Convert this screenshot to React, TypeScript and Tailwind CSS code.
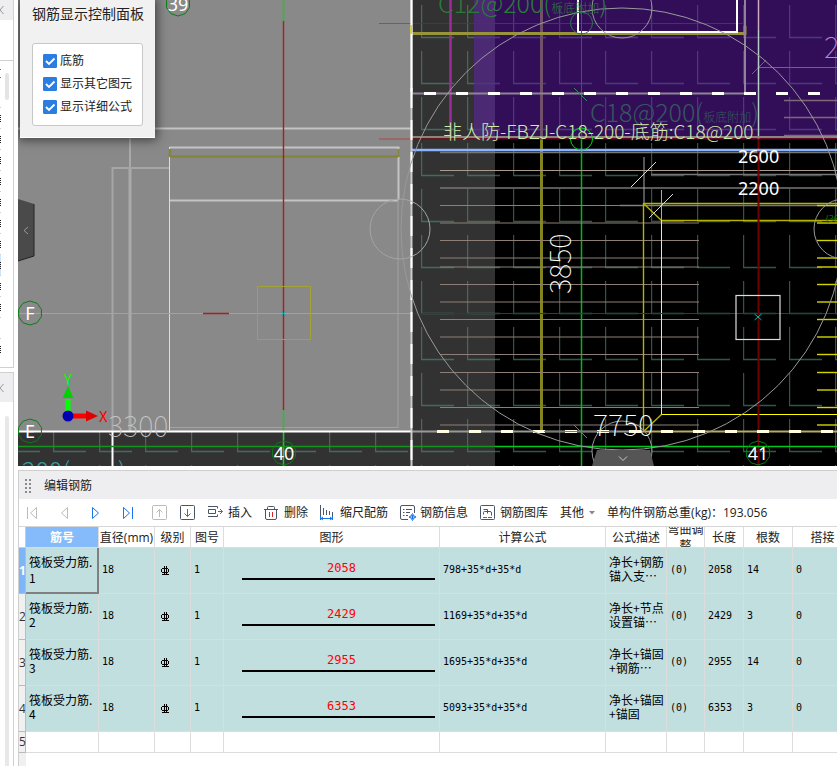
import { ReactNode, useState } from 'react';
import clsx from 'clsx';

const uiFont = "font-['Open_Sans','Noto_Sans_CJK_SC',sans-serif]";
const monoFont = "font-['DejaVu_Sans_Mono','Noto_Sans_CJK_SC',monospace]";
const cadFont = "font-['Noto_Sans_CJK_SC',sans-serif]";

interface BarRow {
    name: string;
    diameter: string;
    shapeNo: string;
    shape: string;
    formula: string;
    description: string[];
    bend: string;
    length: string;
    count: string;
    lap: string;
}

const rows: BarRow[] = [
    { name: '筏板受力筋.1', diameter: '18', shapeNo: '1', shape: '2058', formula: '798+35*d+35*d', description: ['净长+钢筋', '锚入支⋯'], bend: '(0)', length: '2058', count: '14', lap: '0' },
    { name: '筏板受力筋.2', diameter: '18', shapeNo: '1', shape: '2429', formula: '1169+35*d+35*d', description: ['净长+节点', '设置锚⋯'], bend: '(0)', length: '2429', count: '3', lap: '0' },
    { name: '筏板受力筋.3', diameter: '18', shapeNo: '1', shape: '2955', formula: '1695+35*d+35*d', description: ['净长+锚固', '+钢筋⋯'], bend: '(0)', length: '2955', count: '14', lap: '0' },
    { name: '筏板受力筋.4', diameter: '18', shapeNo: '1', shape: '6353', formula: '5093+35*d+35*d', description: ['净长+锚固', '+锚固'], bend: '(0)', length: '6353', count: '3', lap: '0' },
];

const columns = [
    { title: '筋号', width: 'w-[73px]' },
    { title: '直径(mm)', width: 'w-[56px]' },
    { title: '级别', width: 'w-[36px]' },
    { title: '图号', width: 'w-[33px]' },
    { title: '图形', width: 'w-[216px]' },
    { title: '计算公式', width: 'w-[166px]' },
    { title: '公式描述', width: 'w-[61px]' },
    { title: '弯曲调整', width: 'w-[38px]' },
    { title: '长度', width: 'w-[39px]' },
    { title: '根数', width: 'w-[49px]' },
    { title: '搭接', width: 'w-[60px]' },
];

const barLines = [205.5, 223, 240.5, 258, 267, 284.5, 302, 319.5, 337, 354.5, 372.5, 390, 407.5, 425];

const axes = [
    { label: '39', x: 178, y: 4 },
    { label: 'F', x: 30, y: 313 },
    { label: 'E', x: 30, y: 431 },
    { label: '40', x: 284, y: 453 },
    { label: '41', x: 758, y: 453 },
];

const octagon = (x: number, y: number, r: number) =>
    Array.from({ length: 10 }, (_, i) => {
        const a = (i * Math.PI) / 5 + Math.PI / 2;
        return `${x + r * Math.cos(a)},${y + r * Math.sin(a)}`;
    }).join(' ');

function Drawing() {
    return (
        <svg className="block h-full w-full" viewBox="18 0 819 466" preserveAspectRatio="xMinYMin slice" fill="none">
            <defs>
                <pattern id="slab" x="421" y="5" width="46" height="46" patternUnits="userSpaceOnUse">
                    <path d="M.5 0V33M0 32.5H33" stroke="#4f8f78" strokeWidth="1.4" />
                </pattern>
                <pattern id="slabPurple" x="421" y="5" width="46" height="46" patternUnits="userSpaceOnUse">
                    <path d="M.5 0V33M0 32.5H33" stroke="#463a80" strokeWidth="1.4" />
                </pattern>
            </defs>

            {/* slab areas */}
            <rect x="18" width="819" height="466" fill="#323232" />
            <rect x="495" y="139" width="342" height="327" fill="#000" />
            <rect x="412" width="62" height="139" fill="url(#slab)" opacity=".6" />
            <rect x="412" y="139" width="425" height="327" fill="url(#slab)" opacity=".6" />
            <rect x="474" width="363" height="139" fill="#330e58" />
            <rect x="474" width="21" height="139" fill="#4b2a73" />
            <rect x="474" width="363" height="139" fill="url(#slabPurple)" />
            <rect x="18" y="432" width="394" height="34" fill="url(#slab)" opacity=".6" />
            <rect x="18" width="394" height="431" fill="#898989" />

            {/* left raft */}
            <path d="M18 128.5H411M169.5 200.5H398M169.5 147.5H398.5V200" stroke="#c4c4c4" strokeWidth="2" />
            <path d="M130 128V168" stroke="#b4b4b4" strokeWidth="1.5" />
            <path d="M130 168V431" stroke="#aaa" strokeWidth="3" />
            <path d="M112.5 431V168H169" stroke="#a6a6a6" strokeWidth="2" />
            <path d="M169.5 147V430" stroke="#ddd" />
            <path d="M398 200V427.5H170M18 313.5H411" stroke="#a2a2a2" />
            <path d="M170 156.5H398M170 149V157M398.5 149V157" stroke="#85853c" strokeWidth="2.5" />
            <path d="M283.5 0V21M283.5 410V466" stroke="#22c822" strokeWidth="1.5" />
            <path d="M283.5 21V410M203 313.5H229" stroke="#b01c1c" strokeWidth="1.4" />
            <rect x="257.5" y="286.5" width="53" height="53" stroke="#a3a335" />
            <path d="M281 311l5 5M286 311l-5 5" stroke="#2fa3a3" />
            <path d="M112.5 432V466" stroke="#fff" strokeWidth="2" />
            <path d="M18 431.5H412" stroke="#fff" strokeWidth="2" />

            {/* beams above the raft edge */}
            <path d="M379 23.5H411M379 139H411" stroke="#ae4444" />
            <path d="M411 23.5H745" stroke="#921050" />
            <path d="M450.5 0V137" stroke="#9b2d9b" strokeWidth="2.5" />
            <path d="M541.5 0V139" stroke="#70506a" strokeWidth="3" />
            <path d="M541.5 139V431" stroke="#84841c" strokeWidth="3" />
            <path d="M411 33.5H745V26" stroke="#99933a" strokeWidth="3" />
            <path d="M745 0V94" stroke="#8f8398" strokeWidth="2" />
            <path d="M578 0V32H737V0" stroke="#fff" strokeWidth="2" />
            <path d="M581.5 0V139" stroke="#2d6350" />
            <path d="M581.5 139V466" stroke="#00b81c" strokeWidth="1.5" />
            <path d="M411 93.5H745" stroke="#8f8398" strokeWidth="2" />
            <path d="M424 93.5H822" stroke="#fff" strokeWidth="3" strokeDasharray="12 20" />
            <path d="M574 88l13 13M752 74l14-14M758 67.5H837" stroke="#36885c" />

            {/* rebar lines */}
            <path d="M784 100.5H837M784 117.5H837M784 135.5H837" stroke="#7d6878" strokeWidth="1.4" />
            <path d="M440 152.5H837M440 188H837M620 205.5H837M651 174.5H837" stroke="#777" strokeWidth="1.4" />
            <path d="M440 170.5H837" stroke="#a8988e" />
            {barLines.map((y) => (
                <g key={y}>
                    <path d={`M440 ${y}H699`} stroke="#8d7f78" strokeWidth="1.2" />
                    <path d={`M817 ${y}H837`} stroke="#d4d400" strokeWidth="1.4" />
                </g>
            ))}
            <path d="M643.5 431V203.5H837M661.5 220.5H837M643.5 203.5L661.5 220.5M661.5 414.5L643.5 431.5" stroke="#b4b400" strokeWidth="1.4" />
            <path d="M661.5 220V414.5H837" stroke="#ff0" />
            <path d="M644 157V203M661.5 190V220" stroke="#aaa" />
            <path d="M631 187L656 162M649 218L673 194" stroke="#ddd" />

            <path d="M411 313.5H837" stroke="#8b1414" />
            <path d="M758.5 139V466" stroke="#6e0000" strokeWidth="2" />
            <path d="M758.5 0V30" stroke="#d0a8c0" strokeWidth="1.5" />
            <path d="M758.5 30V139" stroke="#b6cfc6" strokeWidth="1.5" />
            <rect x="736" y="295.5" width="44" height="44" stroke="#ddd" strokeWidth="1.2" />
            <path d="M754.5 314l7 6M761.5 314l-7 6" stroke="#00b4b4" />

            <path d="M411 137H837" stroke="#8b8580" strokeWidth="2" />
            <path d="M411 139H837" stroke="#960000" />
            <path d="M411 150H837" stroke="#8cb4ff" strokeWidth="2.6" />

            <path d="M411 431.5H643" stroke="#999" strokeWidth="2" />
            <path d="M643 431.5H837" stroke="#b3ae62" strokeWidth="2" />
            <path d="M437 431.5H837" stroke="#fffce0" strokeWidth="3" strokeDasharray="12 20" />
            <path d="M544 431.5H617M574 425l13 13" stroke="#00c81c" />
            <path d="M18 446.5H495" stroke="#14941c" strokeWidth="1.5" />
            <path d="M495 446.5H837" stroke="#00c81c" strokeWidth="1.5" />
            <path d="M411.5 0V466" stroke="#ccc" strokeWidth="2" />
            <path d="M411.5 0V92" stroke="#fff" strokeWidth="2" />
            <path d="M411.5 88V466" stroke="#fff" strokeWidth="2" strokeDasharray="20 12" />
            <path d="M411 25V34" stroke="#d6d43a" strokeWidth="2" />

            {/* section marks */}
            <circle cx="622" cy="229" r="221" stroke="#999" />
            <circle cx="400" cy="229" r="30" stroke="#a4a4a4" />
            <circle cx="844" cy="229" r="30" stroke="#999" />
            <circle cx="622" cy="8" r="30" stroke="#999" />
            <circle cx="622" cy="451" r="30" stroke="#999" />
            <circle cx="581.5" cy="23" r="11" stroke="#2d7350" />
            <circle cx="581.5" cy="139" r="11" stroke="#00d81c" />

            {/* annotations */}
            <g className={clsx(cadFont, 'font-light')}>
                <text x="438" y="13" fill="#2a7a3a" className="text-[25px]">C12@200(<tspan className="text-xs">板底附加</tspan>)</text>
                <text x="590" y="122" fill="#34585e" className="text-[25px]">C18@200(<tspan className="text-xs">板底附加</tspan>)</text>
                <text x="22" y="480" fill="#35a0a0" className="text-[25px]">200(<tspan className="text-xs">板底附加</tspan>)</text>
            </g>
            <g className={clsx(cadFont, 'text-[29px] font-thin')}>
                <text x="108" y="437" fill="#c4c4c4">3300</text>
                <text x="593" y="436" fill="#fff">7750</text>
                <text transform="translate(571 294) rotate(-90)" fill="#fff">3850</text>
                <text x="824" y="58" fill="#b48ad8">2</text>
            </g>
            <text x="443" y="139" fill="#cfeaaa" className={clsx(cadFont, 'text-[19px] font-light')}>非人防-FBZJ-C18-200-底筋:C18@200</text>
            <g fill="#fff" className="font-['Noto_Sans',sans-serif] text-[18px]">
                <text x="738" y="163">2600</text>
                <text x="738" y="195">2200</text>
            </g>
            <text x="826" y="222" fill="#007a00" className="font-['Noto_Sans',sans-serif] text-[9px]">(36</text>

            {axes.map((axis) => (
                <g key={axis.label}>
                    <polygon points={octagon(axis.x, axis.y, 12)} stroke="#0a7d14" />
                    <text x={axis.x} y={axis.y + 7} textAnchor="middle" fill="#fff" className="font-['Noto_Sans',sans-serif] text-[18px]">{axis.label}</text>
                </g>
            ))}

            {/* coordinate tripod */}
            <path d="M68 412V399" stroke="#0f0" strokeWidth="5" />
            <path d="M62.5 398L68 386L73.5 398Z" fill="#00d200" />
            <path d="M72 416H86" stroke="#f00" strokeWidth="5" />
            <path d="M86 410.5L98 416L86 421.5Z" fill="#e00000" />
            <circle cx="68" cy="416" r="5.5" fill="#0000b4" />
            <g className={clsx(cadFont, 'text-[15px]')}>
                <text x="64" y="385" fill="#0f0">Y</text>
                <text x="99" y="422" fill="#f00">X</text>
            </g>

            {/* collapse handles */}
            <path d="M18 199L34 204V256L18 261Z" fill="#4a4a4a" />
            <path d="M34 204V256L18 261" stroke="#222" />
            <path d="M28 227L24 230.5L28 234" stroke="#999" />
            <path d="M597 450H650L654 466H592Z" fill="#555" />
            <path d="M619 456.5L623 460.5L627 456.5" stroke="#ccc" />
        </svg>
    );
}

function CheckOption({ label }: { label: string }) {
    const [checked, setChecked] = useState(true);

    return (
        <label className="flex h-[23px] items-center gap-[3px]">
            <span className="relative size-[14px]">
                <input
                    type="checkbox"
                    checked={checked}
                    onChange={(e) => setChecked(e.target.checked)}
                    className="block size-[14px] appearance-none rounded-[1px] border border-[#2b7de1] checked:bg-[#2b7de1]"
                />
                <svg className="pointer-events-none absolute inset-0" width="14" height="14" viewBox="0 0 14 14" fill="none">
                    <path d="M3 7L6 10L11.5 4.5" stroke="#fff" strokeWidth="1.8" />
                </svg>
            </span>
            {label}
        </label>
    );
}

function DisplayPanel() {
    return (
        <section className="absolute top-0 left-[2px] w-[135px] border-b border-white bg-[#f1f1f1] px-3 pb-[11px] text-xs text-[#222] shadow-[0_0_10px_2px_rgba(0,0,0,0.55)]">
            <h2 className="h-[43px] pt-1 text-sm leading-5 whitespace-nowrap">钢筋显示控制面板</h2>
            <div className="h-[83px] rounded-[3px] border border-[#c8c8c8] bg-white px-[10px] pt-[5px] whitespace-nowrap">
                <CheckOption label="底筋" />
                <CheckOption label="显示其它图元" />
                <CheckOption label="显示详细公式" />
            </div>
        </section>
    );
}

function CollapseHeader({ className }: { className: string }) {
    return (
        <div className={clsx('flex items-center bg-[#eeeef0]', className)}>
            <svg width="4" height="8" viewBox="0 0 4 8" fill="none" stroke="#999">
                <path d="M3.5 0L0 4L3.5 8" />
            </svg>
        </div>
    );
}

function Sidebar() {
    return (
        <aside className="flex w-[18px] shrink-0 flex-col bg-white">
            <div className="h-[368px] w-[14px] border-r border-b border-[#d0d0d0]">
                <CollapseHeader className="h-[20px]" />
                <div className="h-[41px] border-b border-[#d0d0d0]" />
                <div className="flex h-[46px] justify-between pt-2">
                    <div className="h-[9px] w-px border-y border-[#2b7de1]" />
                    <div className="mt-1 mr-1 h-[27px] w-1 rounded-full bg-[#e4e4e4]" />
                </div>
                {Array.from({ length: 12 }, (_, i) => (
                    <div key={i} className={clsx('flex h-[21px] w-px flex-col justify-center gap-px border-t border-[#ccc]', i === 7 && 'bg-[#cfe4ff]')}>
                        {i !== 10 && [0, 1, 2, 3].map((n) => <i key={n} className="h-px bg-[#222]" />)}
                    </div>
                ))}
            </div>
            <div className="mt-1 flex w-[14px] grow flex-col border-t border-r border-[#d0d0d0]">
                <CollapseHeader className="h-[29px]" />
                <div className="mt-[14px] ml-[5px] w-1 grow rounded-t-full bg-[#e8e8e8]" />
            </div>
        </aside>
    );
}

interface ToolButtonProps {
    title: string;
    label?: string;
    color?: string;
    children: ReactNode;
}

function ToolButton({ title, label, color = 'text-[#4a5568]', children }: ToolButtonProps) {
    return (
        <button type="button" title={title} className="flex shrink-0 items-center gap-1 whitespace-nowrap">
            <svg width="16" height="16" viewBox="0 0 16 16" fill="none" stroke="currentColor" className={color}>
                {children}
            </svg>
            {label}
        </button>
    );
}

function Toolbar() {
    return (
        <div className="flex h-[27px] items-center gap-3 overflow-hidden pl-[5px] text-xs text-[#222]">
            <div className="flex shrink-0 gap-4">
                <ToolButton title="首条" color="text-[#bbb]">
                    <path d="M3.5 2V14M12.5 2.5V13.5L6.5 8Z" />
                </ToolButton>
                <ToolButton title="上一条" color="text-[#bbb]">
                    <path d="M11.5 2.5V13.5L5.5 8Z" />
                </ToolButton>
                <ToolButton title="下一条" color="text-[#1a73e8]">
                    <path d="M4.5 2.5V13.5L10.5 8Z" />
                </ToolButton>
                <ToolButton title="末条" color="text-[#1a73e8]">
                    <path d="M12.5 2V14M3.5 2.5V13.5L9.5 8Z" />
                </ToolButton>
                <ToolButton title="上移" color="text-[#bbb]">
                    <rect x=".5" y=".5" width="14" height="14" rx="1" />
                    <path d="M7.5 12V4.5M4.5 7.5L7.5 4.5L10.5 7.5" />
                </ToolButton>
            </div>
            <ToolButton title="下移">
                <rect x=".5" y=".5" width="14" height="14" rx="1" />
                <path d="M7.5 4V11.5M4.5 8.5L7.5 11.5L10.5 8.5" stroke="#1a73e8" />
            </ToolButton>
            <ToolButton title="插入" label="插入">
                <path d="M0 1.5H9.5V3.5M0 11.5H9.5V9.5M.5 4.5H7.5V8.5H.5Z" />
                <path d="M10 6.5H14.5M12 4L14.5 6.5L12 9" stroke="#1a73e8" />
            </ToolButton>
            <ToolButton title="删除" label="删除">
                <path d="M0 4.5H14M3.5 4V2.5Q3.5 1.5 4.5 1.5H9.5Q10.5 1.5 10.5 2.5V4M1.5 5V13Q1.5 14.5 3 14.5H11Q12.5 14.5 12.5 13V5" />
                <path d="M5.5 7V12M8.5 7V12" stroke="#e02020" />
            </ToolButton>
            <ToolButton title="缩尺配筋" label="缩尺配筋">
                <path d="M.5 0V11M3.5 3V10M6.5 5V10M9.5 6V10M12.5 7V11" />
                <path d="M.5 11V15M12.5 11V15M1 13.5H12M3 12L1 13.5L3 15M10 12L12 13.5L10 15" stroke="#1a73e8" />
            </ToolButton>
            <ToolButton title="钢筋信息" label="钢筋信息">
                <path d="M8 14.5H2Q.5 14.5 .5 13V2Q.5 .5 2 .5H13Q14.5 .5 14.5 2V8M3 4.5H4.5M6 4.5H12M3 7.5H4.5M6 7.5H10M3 10.5H4.5M6 10.5H8" />
                <path d="M12.5 8.5L14 11L16 12L14 13L12.5 15.5L11 13L9 12L11 11ZM12.500 10V14M10.500 12H14.500" stroke="#1a73e8" />
            </ToolButton>
            <ToolButton title="钢筋图库" label="钢筋图库">
                <rect x=".5" y=".5" width="14" height="14" rx="1" />
                <path d="M3.5 4.5H7.5V8.5M3.5 9.500V7.500Q3.500 6.500 4.500 6.500H10Q11.500 6.500 11.500 8V10.500" />
                <path d="M3 12.5H7M8 12.5H12" stroke="#1a73e8" />
            </ToolButton>
            <button type="button" className="flex shrink-0 items-center gap-[5px]">
                其他
                <svg width="6" height="4" viewBox="0 0 6 4" fill="#888">
                    <path d="M0 0H6L3 3.5Z" />
                </svg>
            </button>
            <span className="shrink-0 whitespace-nowrap">单构件钢筋总重(kg)：193.056</span>
        </div>
    );
}

function GradeSymbol() {
    return (
        <svg width="10" height="10" viewBox="0 0 10 10" fill="none" stroke="#000" role="img" aria-label="三级钢">
            <path d="M2 2.5H8M2 6.5H8M1.5 3V6M8.5 3V6M4.5 0V9M6.5 0V9M2 8.5H9" />
        </svg>
    );
}

function BarTable() {
    const border = 'border-r border-b border-[#dcdcdc]';
    const cell = clsx(border, 'p-0 pl-[3px] text-left');
    const valueCell = clsx(cell, 'pb-[2px] text-[10px]');

    return (
        <table className="w-[834px] table-fixed border-separate border-spacing-0 bg-white text-xs text-black">
            <thead>
                <tr className="h-[21px]">
                    <th className="w-[7px] border-r border-b border-[#ccc] p-0" />
                    {columns.map((col, i) => (
                        <th
                            key={col.title}
                            className={clsx(border, 'p-0', col.width, i === 0 ? 'bg-[#85bbfb] font-bold text-white' : 'font-normal text-[#222]')}
                        >
                            <div className={clsx('flex h-5 items-center justify-center overflow-hidden pt-px leading-4', i !== 7 && 'whitespace-nowrap')}>
                                {col.title}
                            </div>
                        </th>
                    ))}
                </tr>
            </thead>
            <tbody>
                {rows.map((row, i) => (
                    <tr key={row.name} className={clsx('h-[46px] bg-[#c2dfe0]', monoFont)}>
                        <th className={clsx('overflow-hidden border-r border-b border-[#bbb] p-0 text-xs', uiFont, i === 0 ? 'bg-[#7eb5f6] font-bold text-white' : 'bg-[#f0f0f0] font-normal text-[#333]')}>
                            {i + 1}
                        </th>
                        <td
                            className={clsx(
                                'p-0 pl-[3px] text-left break-all',
                                cadFont,
                                i === 0 ? 'border-r-2 border-b-2 border-[#808080] leading-4' : 'border-r border-b border-[#dcdcdc] pb-1 leading-[14px]'
                            )}
                        >
                            {row.name}
                        </td>
                        <td className={valueCell}>{row.diameter}</td>
                        <td className="border-r border-b border-[#dcdcdc] p-0 pl-[5px]"><GradeSymbol /></td>
                        <td className={valueCell}>{row.shapeNo}</td>
                        <td className={cell}>
                            <div className="mr-1 mb-1 ml-[15px] border-b-2 border-black pl-[6px] text-center leading-5 text-[#f00]">{row.shape}</div>
                        </td>
                        <td className={valueCell}>{row.formula}</td>
                        <td className={clsx(border, cadFont, 'p-0 pb-1 pl-[3px] leading-[14px] whitespace-nowrap')}>
                            {row.description.map((line) => <div key={line}>{line}</div>)}
                        </td>
                        <td className={valueCell}>{row.bend}</td>
                        <td className={valueCell}>{row.length}</td>
                        <td className={valueCell}>{row.count}</td>
                        <td className={valueCell}>{row.lap}</td>
                    </tr>
                ))}
                <tr className="h-[21px]">
                    <th className="border-r border-b border-[#bbb] bg-[#f0f0f0] p-0 font-normal text-[#333]">5</th>
                    {columns.map((col) => <td key={col.title} className={cell} />)}
                </tr>
            </tbody>
        </table>
    );
}

export default function App() {
    return (
        <div className={clsx('flex min-h-screen overflow-hidden bg-white', uiFont)}>
            <Sidebar />
            <main className="flex min-w-0 grow flex-col gap-1">
                <div className="relative h-[466px] overflow-hidden">
                    <Drawing />
                    <DisplayPanel />
                </div>
                <section className="flex grow flex-col overflow-hidden border-t border-l border-[#cfcfcf]">
                    <header className="flex h-7 items-center gap-[13px] bg-[#eeeef0] pt-px pl-[6px] text-xs text-[#222]">
                        <span className="grid grid-cols-2 gap-[2px]">
                            {Array.from({ length: 8 }, (_, i) => <i key={i} className="size-[2px] bg-[#8a8a8a]" />)}
                        </span>
                        <h2>编辑钢筋</h2>
                    </header>
                    <Toolbar />
                    <div className="grow border-t border-[#d6d6d6]">
                        <BarTable />
                        <div className="h-[13px] w-[7px] bg-[#f0f0f0]" />
                    </div>
                </section>
            </main>
        </div>
    );
}
